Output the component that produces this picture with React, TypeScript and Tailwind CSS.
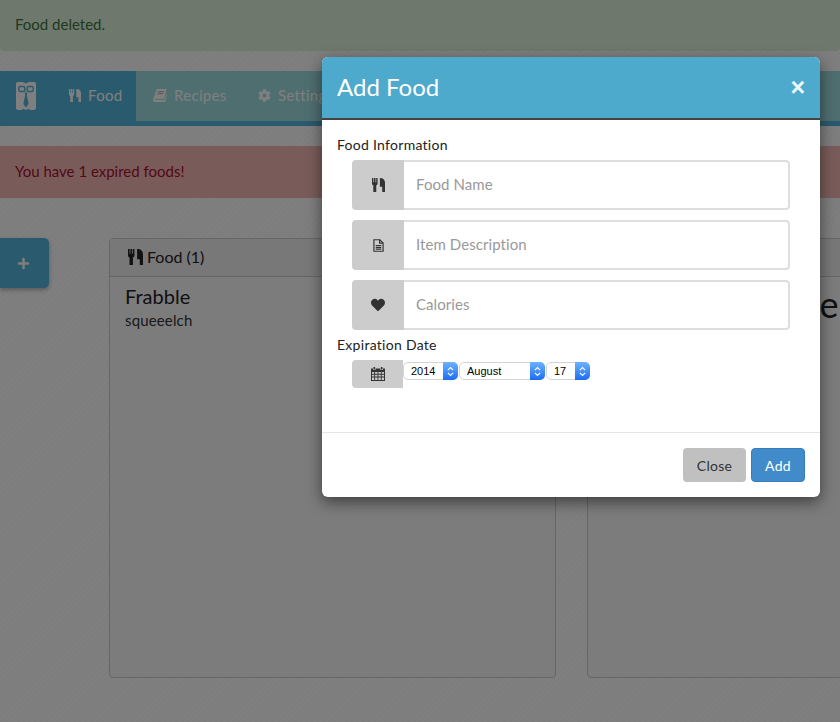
import { FaCog, FaHeart, FaPlus } from "react-icons/fa";

function Cutlery({ className }: { className?: string }) {
  return (
    <svg viewBox="0 0 14 15" className={className} fill="currentColor">
      <path d="M0 0h1.500v4.500h.7V0h1.600v4.500h.7V0H6v6c0 1-.6 1.700-1.400 1.900V15H1.400V7.900C.6 7.700 0 7 0 6z" />
      <path d="M8.500 0C12 0 14 1.800 14 5v10h-3V9.500H8.500z" />
    </svg>
  );
}

function BookIcon({ className }: { className?: string }) {
  return (
    <svg viewBox="0 0 15 14" className={className} fill="currentColor">
      <path d="M4 0h10.500l-2.600 10.500H2.600c-.8 0-1 .9-.2 1h10.300l1.600-7 .7.500L13.400 14H2C.5 14-.3 12.700.1 11.300z" />
      <path fill="#000" fillOpacity=".35" d="M5.200 2.400h6.600l-.2 1H5zM4.600 4.600h6.600l-.2 1H4.400z" />
    </svg>
  );
}

function FileIcon({ className }: { className?: string }) {
  return (
    <svg viewBox="0 0 12 14" className={className} fill="none" stroke="currentColor" strokeWidth="1.300">
      <path d="M1 .7h6.500l3.500 3.500v9.100H1z" />
      <path d="M7.200 .7v3.800H11M3 7h6M3 9h6M3 11h6" />
    </svg>
  );
}

function CalendarIcon({ className }: { className?: string }) {
  return (
    <svg viewBox="0 0 14 14" className={className} fill="currentColor">
      <path d="M2.500 0h1.600v2.400H2.500zM9.900 0h1.600v2.400H9.900z" />
      <path fillRule="evenodd" d="M0 1.400h2v1.600h2.600V1.400h4.800v1.600H12V1.400h2V14H0zM1 5v1.800h2.200V5zm3.100 0v1.800h2.400V5zm3.300 0v1.800h2.400V5zm3.300 0v1.800H13V5zM1 7.700v1.800h2.200V7.700zm3.100 0v1.800h2.400V7.700zm3.300 0v1.800h2.400V7.700zm3.300 0v1.800H13V7.700zM1 10.400V13h2.200v-2.600zm3.100 0V13h2.400v-2.600zm3.300 0V13h2.400v-2.600zm3.300 0V13H13v-2.600z" />
    </svg>
  );
}

function ButlerLogo() {
  return (
    <svg viewBox="0 0 20 28" className="h-[28px] w-[20px]">
      <path fill="currentColor" d="M2 0h5l3 1.500L13 0h5c1.200 0 2 .8 2 2v24c0 1.200-.8 2-2 2h-4l-1-1.200L10 28l-3-1.200L6 28H2c-1.200 0-2-.8-2-2V2C0 .8.800 0 2 0z" />
      <g fill="none" stroke="#54b4da" strokeWidth="1.400">
        <rect x="2.800" y="4.500" width="6" height="5" rx="1.500" />
        <rect x="11.200" y="4.500" width="6" height="5" rx="1.500" />
      </g>
      <path fill="#54b4da" d="M8.600 10.500h2.800l-.6 2.500 1.800 9-2.600 3.500L7.400 22l1.800-9z" />
    </svg>
  );
}

function NavItem({ icon, label, active }: { icon: React.ReactNode; label: string; active?: boolean }) {
  return (
    <div className={`flex h-full items-center gap-[7px] pb-[1px] tracking-[0.02em] ${active ? "w-[85px] pl-[18px]" : "w-[105px] pl-[17px]"}`}>
      {icon}
      <span>{label}</span>
    </div>
  );
}

function Addon({ children }: { children: React.ReactNode }) {
  return <div className="flex w-[52px] items-center justify-center rounded-l-[4px] bg-[#cccccc] text-[#333]">{children}</div>;
}

function TextField({ icon, placeholder }: { icon: React.ReactNode; placeholder: string }) {
  return (
    <div className="ml-[15px] flex h-[50px] w-[438px]">
      <Addon>{icon}</Addon>
      <input
        placeholder={placeholder}
        className="min-w-0 flex-1 rounded-r-[4px] border-2 border-l-0 border-[#dedede] bg-white pb-[1px] pl-[12px] text-[15px] tracking-[0.005em] text-[#333] placeholder:text-[#999] focus:outline-none"
      />
    </div>
  );
}

function DateSelect({ value, width }: { value: string; width: string }) {
  return (
    <div className={`relative h-[18px] ${width}`}>
      <select
        defaultValue={value}
        className="block h-full w-full appearance-none rounded-[5px] border border-[#d4d4d4] bg-white pl-[7px] font-['Liberation_Sans',sans-serif] text-[11px] leading-none text-black"
      >
        <option>{value}</option>
      </select>
      <div className="pointer-events-none absolute inset-y-0 right-0 flex w-[15px] items-center justify-center rounded-r-[5px] bg-gradient-to-b from-[#6cb2ff] to-[#1a6cf0]">
        <svg viewBox="0 0 8 12" className="h-[11px] w-[7px]" fill="none" stroke="white" strokeWidth="1.300">
          <path d="M1 4.500 4 1.500l3 3M1 7.500l3 3 3-3" />
        </svg>
      </div>
    </div>
  );
}

export default function App() {
  return (
    <div className="relative h-[722px] w-[840px] overflow-hidden bg-[repeating-linear-gradient(135deg,#ffffff_0,#ffffff_2px,#fafafa_2px,#fafafa_4px)] font-['Lato','Open_Sans',sans-serif] text-[15px] text-[#333]">
      <div className="flex h-[51px] items-center rounded-b-[4px] bg-[#dff0d8] px-[15px] pb-[2px] text-[#3c763d]">Food deleted.</div>

      <nav className="mt-[20px] h-[55px] border-b-[5px] border-[#54b4da] bg-[#9edce0] text-white">
        <div className="flex h-full">
          <div className="flex w-[51px] items-center justify-center bg-[#54b4da]">
            <ButlerLogo />
          </div>
          <div className="bg-[#54b4da]">
            <NavItem active icon={<Cutlery className="h-[13px] w-[12px]" />} label="Food" />
          </div>
          <NavItem icon={<BookIcon className="h-[13px] w-[14px]" />} label="Recipes" />
          <NavItem icon={<FaCog className="h-[13px] w-[13px]" />} label="Settings" />
        </div>
      </nav>

      <div className="mt-[20px] flex h-[52px] items-center bg-[#f2b8b4] px-[15px] pb-[1px] text-[#a80f2b]">You have 1 expired foods!</div>

      <div className="mt-[40px] flex items-start">
        <div className="flex h-[50px] w-[49px] shrink-0 items-center justify-center rounded-r-[5px] bg-[#54b4da] pr-[3px] text-white shadow-[0_2px_4px_rgba(0,0,0,0.3)]">
          <FaPlus className="h-[13px] w-[13px]" />
        </div>
        <section className="ml-[60px] h-[440px] w-[447px] shrink-0 rounded-[4px] border border-[#cccccc] bg-[#f9f9f9]">
          <header className="flex h-[38px] items-center gap-[4px] border-b border-[#cccccc] bg-[#f0f0f0] pb-[1px] pl-[18px] text-[16px] text-[#222]">
            <Cutlery className="h-[16px] w-[15px]" />
            <span>Food (1)</span>
          </header>
          <div className="pl-[15px] pt-[7px]">
            <h3 className="text-[20px] leading-[24px] text-[#222]">Frabble</h3>
            <p className="text-[15px] leading-[24px] tracking-[0.01em] text-[#333]">squeeelch</p>
          </div>
        </section>
        <section className="ml-[31px] h-[440px] w-[447px] shrink-0 rounded-[4px] border border-[#cccccc] bg-[#f9f9f9]">
          <div className="h-[38px] border-b border-[#cccccc] bg-[#f0f0f0]" />
          <p className="ml-[145px] mt-[5px] text-[36px] leading-[44px] text-[#222]">Recipe</p>
        </section>
      </div>

      <div className="absolute inset-0 bg-black/50">
        <div className="ml-[322px] mt-[57px] flex h-[440px] w-[498px] flex-col overflow-hidden rounded-[6px] bg-white shadow-[0_5px_15px_rgba(0,0,0,0.5)]">
          <header className="flex h-[63px] items-center justify-between border-b-2 border-[#444444] bg-[#4eaacc] pb-[1px] pl-[15px] pr-[15px] text-white">
            <h2 className="text-[24px] leading-none">Add Food</h2>
            <span className="font-['Liberation_Sans',sans-serif] text-[25px] font-bold leading-none text-white/90">×</span>
          </header>

          <div className="flex-1 px-[15px] pt-[15px]">
            <div className="h-[25px] text-[14px] leading-[20px] tracking-[0.02em] text-[#222]">Food Information</div>
            <div className="flex flex-col gap-[10px]">
              <TextField icon={<Cutlery className="h-[14px] w-[13px]" />} placeholder="Food Name" />
              <TextField icon={<FileIcon className="h-[13px] w-[11px]" />} placeholder="Item Description" />
              <TextField icon={<FaHeart className="h-[14px] w-[14px]" />} placeholder="Calories" />
            </div>
            <div className="mt-[5px] h-[25px] text-[14px] leading-[20px] tracking-[0.02em] text-[#222]">Expiration Date</div>
            <div className="ml-[15px] flex h-[28px]">
              <div className="flex w-[51px] items-center justify-center rounded-l-[4px] bg-[#cccccc] text-[#333]">
                <CalendarIcon className="h-[14px] w-[14px]" />
              </div>
              <div className="flex items-start gap-[1px] pt-[2px]">
                <DateSelect value="2014" width="w-[55px]" />
                <DateSelect value="August" width="w-[86px]" />
                <DateSelect value="17" width="w-[44px]" />
              </div>
            </div>
          </div>

          <footer className="flex h-[65px] items-start justify-end gap-[5px] border-t border-[#e5e5e5] pr-[15px] pt-[15px] text-[14px] tracking-[0.02em]">
            <button type="button" className="h-[34px] w-[63px] rounded-[4px] bg-[#c0c0c0] text-[#333]">
              Close
            </button>
            <button type="button" className="h-[34px] w-[54px] rounded-[4px] border border-[#357ebd] bg-[#428bca] text-white">
              Add
            </button>
          </footer>
        </div>
      </div>
    </div>
  );
}
